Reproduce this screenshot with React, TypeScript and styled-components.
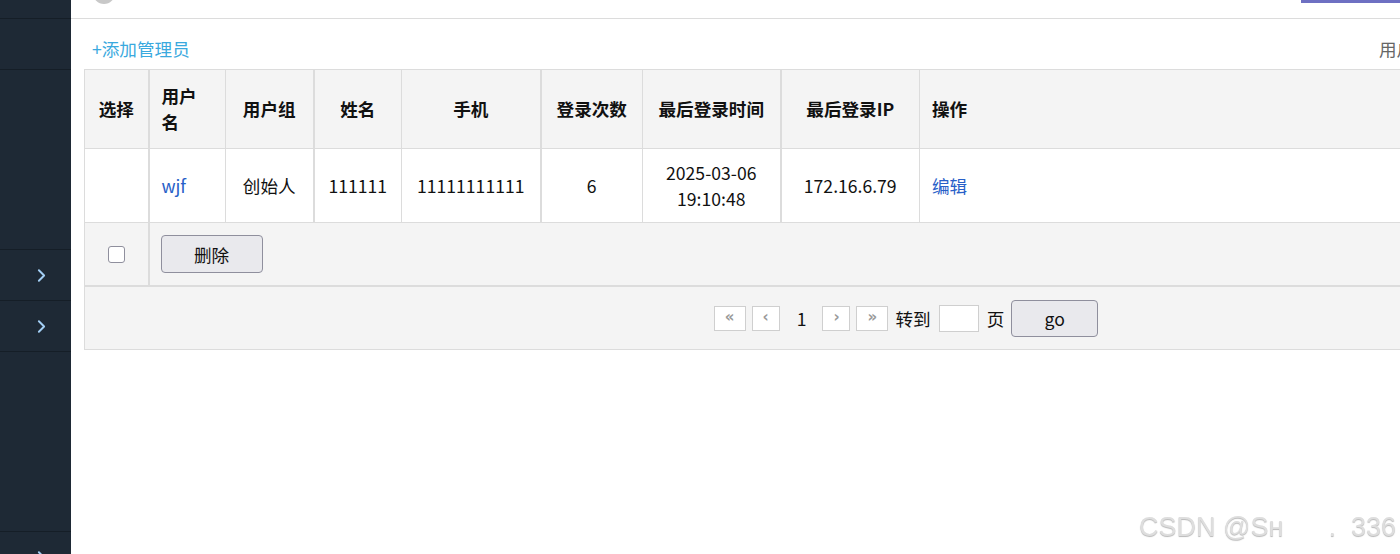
import React from 'react';
import styled, {createGlobalStyle} from "styled-components";
import {ChevronRight} from "lucide-react";

const GlobalStyle = createGlobalStyle`
  html, body {
    margin: 0;
    padding: 0;
    background: #fff;
    overflow: hidden;
  }
  body {
    font-family: "Noto Sans CJK SC", "Noto Sans", "Liberation Sans", sans-serif;
    font-size: 17.6px;
    color: #111;
  }
`;

const Page = styled.div`
  display: flex;
  width: 1400px;
  height: 554px;
  overflow: hidden;
`;

const Sidebar = styled.nav`
  width: 71px;
  flex: none;
  background: #1e2935;
  display: flex;
  flex-direction: column;
`;

const SideItem = styled.div<{ $h: number }>`
  height: ${p => p.$h}px;
  flex: none;
  box-sizing: border-box;
  border-bottom: 1px solid #151e27;
  display: flex;
  align-items: center;
  justify-content: flex-end;
  padding-right: 19px;
  color: #a3cff5;
`;

const Main = styled.main`
  flex: 1;
  min-width: 0;
  overflow: hidden;
`;

const Content = styled.div`
  width: 1673px;
`;

const Header = styled.header`
  height: 18px;
  border-bottom: 1px solid #dcdcdc;
  display: flex;
  align-items: flex-end;
  overflow: hidden;
`;

const Avatar = styled.div`
  width: 22px;
  height: 22px;
  border-radius: 50%;
  background: #c8c8c8;
  margin: 0 0 14px 22px;
  flex: none;
`;

const ActiveTab = styled.div`
  align-self: flex-start;
  margin-left: auto;
  margin-right: 243px;
  width: 200px;
  height: 3px;
  background: #6e70c2;
`;

const Toolbar = styled.div`
  height: 50px;
  display: flex;
  align-items: center;
  padding: 8px 0 0 21px;
  box-sizing: border-box;
`;

const AddLink = styled.a`
  color: #3aa9de;
  cursor: pointer;
`;

const Search = styled.div`
  margin-left: auto;
  width: 300px;
  margin-right: 65px;
  color: #666;
  display: flex;
  align-items: center;
  gap: 6px;
`;

const SearchInput = styled.input`
  width: 150px;
  height: 26px;
  border: 1px solid #ccc;
`;

const Table = styled.table`
  margin: 0 13px;
  width: 1647px;
  border-collapse: collapse;
  table-layout: fixed;
  border: 1px solid #dcdcdc;
`;

const Th = styled.th<{ $left?: boolean; $thick?: boolean }>`
  height: 78px;
  background: #f4f4f4;
  font-weight: bold;
  line-height: 26px;
  padding: 0 12px;
  text-align: ${p => (p.$left ? "left" : "center")};
  border: 1px solid #dcdcdc;
  border-left-width: ${p => (p.$thick ? 2 : 1)}px;
`;

const Td = styled.td<{ $left?: boolean; $thick?: boolean }>`
  height: 73px;
  background: #fff;
  line-height: 26px;
  padding: 0 12px;
  text-align: ${p => (p.$left ? "left" : "center")};
  border: 1px solid #dcdcdc;
  border-left-width: ${p => (p.$thick ? 2 : 1)}px;
`;

const FootTd = styled.td<{ $thick?: boolean }>`
  height: 62px;
  background: #f4f4f4;
  padding: 0 11px;
  border: 1px solid #dcdcdc;
  border-left-width: ${p => (p.$thick ? 2 : 1)}px;
  border-bottom-width: 2px;
  text-align: left;
`;

const PagerTd = styled.td`
  height: 62px;
  background: #f4f4f4;
  border: 1px solid #dcdcdc;
  padding: 0;
`;

const Link = styled.a`
  color: #2860c8;
  cursor: pointer;
`;

const Check = styled.input`
  appearance: none;
  display: block;
  width: 17px;
  height: 17px;
  margin: 0 auto;
  background: #fff;
  border: 1px solid #8f8f9d;
  border-radius: 3px;
  box-sizing: border-box;
`;

const Button = styled.button<{ $w: number; $h: number }>`
  width: ${p => p.$w}px;
  height: ${p => p.$h}px;
  background: #e9e9ed;
  border: 1px solid #8f8f9d;
  border-radius: 4px;
  font: inherit;
  color: #111;
  padding: 0;
`;

const Pager = styled.div`
  display: flex;
  align-items: center;
  justify-content: center;
  gap: 6px;
  padding-right: 4px;
`;

const PageBtn = styled.span<{ $w: number }>`
  width: ${p => p.$w}px;
  height: 25px;
  box-sizing: border-box;
  border: 1px solid #cfcfcf;
  background: #fff;
  color: #9a9a9a;
  font-family: "DejaVu Sans", sans-serif;
  font-size: 15px;
  font-weight: bold;
  display: flex;
  align-items: center;
  justify-content: center;
  padding-bottom: 2px;
`;

const PageNum = styled.span`
  padding: 0 10px 0 11px;
`;

const PagerText = styled.span`
  margin: 0 1px;
`;

const JumpInput = styled.input`
  width: 40px;
  height: 27px;
  box-sizing: border-box;
  border: 1px solid #cfcfcf;
  margin: 0 1px;
`;

const Watermark = styled.div`
  position: fixed;
  right: 4px;
  bottom: 11px;
  font-family: "Liberation Sans", sans-serif;
  font-size: 27px;
  color: #dedede;
  text-shadow: 0 1px 1px #b8b8b8;
  white-space: pre;
`;

const cols = [64, 77, 88, 88, 139, 102, 138, 139, 812];

const App: React.FC = () => {
  return (
      <Page>
        <GlobalStyle/>
        <Sidebar>
          <SideItem $h={19}/>
          <SideItem $h={51}/>
          <SideItem $h={180}/>
          <SideItem $h={51}><ChevronRight size={21} strokeWidth={2.2}/></SideItem>
          <SideItem $h={51}><ChevronRight size={21} strokeWidth={2.2}/></SideItem>
          <SideItem $h={180}/>
          <SideItem $h={51}><ChevronRight size={21} strokeWidth={2.2}/></SideItem>
        </Sidebar>
        <Main>
          <Content>
            <Header>
              <Avatar/>
              <ActiveTab/>
            </Header>
            <Toolbar>
              <AddLink>+添加管理员</AddLink>
              <Search>用户名： <SearchInput/></Search>
            </Toolbar>
            <Table>
              <colgroup>
                {cols.map((w, i) => <col key={i} style={{width: w}}/>)}
              </colgroup>
              <thead>
              <tr>
                <Th>选择</Th>
                <Th $left $thick>用户名</Th>
                <Th>用户组</Th>
                <Th $thick>姓名</Th>
                <Th>手机</Th>
                <Th $thick>登录次数</Th>
                <Th>最后登录时间</Th>
                <Th $thick>最后登录IP</Th>
                <Th $left>操作</Th>
              </tr>
              </thead>
              <tbody>
              <tr>
                <Td/>
                <Td $left $thick><Link>wjf</Link></Td>
                <Td>创始人</Td>
                <Td $thick>111111</Td>
                <Td>11111111111</Td>
                <Td $thick>6</Td>
                <Td>2025-03-06<br/>19:10:48</Td>
                <Td $thick>172.16.6.79</Td>
                <Td $left><Link>编辑</Link></Td>
              </tr>
              <tr>
                <FootTd><Check type="checkbox"/></FootTd>
                <FootTd $thick colSpan={8}>
                  <Button $w={102} $h={38}>删除</Button>
                </FootTd>
              </tr>
              <tr>
                <PagerTd colSpan={9}>
                  <Pager>
                    <PageBtn $w={32}>«</PageBtn>
                    <PageBtn $w={28}>‹</PageBtn>
                    <PageNum>1</PageNum>
                    <PageBtn $w={28}>›</PageBtn>
                    <PageBtn $w={32}>»</PageBtn>
                    <PagerText>转到</PagerText>
                    <JumpInput/>
                    <PagerText>页</PagerText>
                    <Button $w={87} $h={37}>go</Button>
                  </Pager>
                </PagerTd>
              </tr>
              </tbody>
            </Table>
          </Content>
        </Main>
        <Watermark>{"CSDN @Sн      .  336"}</Watermark>
      </Page>
  );
};

export default App;
